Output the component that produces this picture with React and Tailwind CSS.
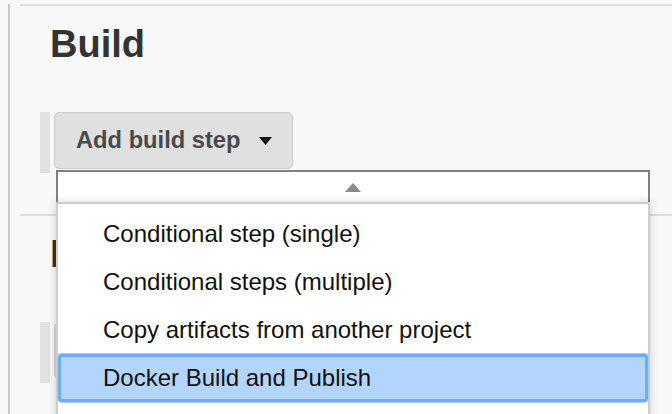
const MENU_ITEMS = [
  "Conditional step (single)",
  "Conditional steps (multiple)",
  "Copy artifacts from another project",
  "Docker Build and Publish",
];

const SELECTED = 3;

function Caret() {
  return (
    <svg width="13" height="8" viewBox="0 0 13 8" className="shrink-0">
      <polygon points="0,0 13,0 6.5,8" fill="#111" />
    </svg>
  );
}

function DropdownMenu() {
  return (
    <div className="absolute left-[16px] top-[58px] w-[594px] z-10">
      {/* scroll-up strip */}
      <div className="h-[32px] bg-white border-2 border-b-0 border-[#808080] flex justify-center pt-[11px]">
        <svg width="16" height="9" viewBox="0 0 16 9">
          <polygon points="8,0 16,9 0,9" fill="#8a8a8a" />
        </svg>
      </div>
      <div className="bg-white border-2 border-[#cdcdcd] border-b-0 pt-[6px] h-[240px] shadow-[0_0_8px_rgba(0,0,0,0.18)]">
        {MENU_ITEMS.map((item, i) => (
          <div
            key={item}
            className={
              i === SELECTED
                ? "h-12 flex items-center pl-[42px] text-[24px] text-[#111] bg-[#b3d4fc] border-[3px] border-[#6eaef8] rounded-[4px] shadow-[0_0_0_1px_#a8cdfb]"
                : "h-12 flex items-center pl-[45px] text-[24px] text-[#111]"
            }
          >
            {item}
          </div>
        ))}
      </div>
    </div>
  );
}

function Section({ title, button, first, children }) {
  return (
    <div className={first ? "mt-1" : "mt-[41px]"}>
      <div className="h-[2px] bg-[#dddddd]" />
      <h2 className="ml-[30px] mt-[19px] text-[38px] leading-[38px] font-bold text-[#333]">
        {title}
      </h2>
      <div className="relative ml-[20px] mt-[49px] flex items-start gap-1">
        <div className="w-[10px] h-[61px] bg-[#e1e1e1]" />
        <button className="h-[57px] flex items-center gap-[19px] pl-[21px] pr-[20px] bg-[#e0e0e0] border border-[#cccccc] rounded-[5px] text-[23.7px] font-bold text-[#4a4a4a]">
          {button}
          <Caret />
        </button>
        {children}
      </div>
    </div>
  );
}

export default function App() {
  return (
    <div
      className="h-[414px] overflow-hidden bg-[#f8f8f8] pl-2"
      style={{ fontFamily: '"Liberation Sans", Arial, sans-serif' }}
    >
      <div className="h-full border-l-2 border-[#c8c8c8] pl-[10px]">
        <Section title="Build" button="Add build step" first>
          <DropdownMenu />
        </Section>
        <Section title="Post-build Actions" button="Add post-build action" />
      </div>
    </div>
  );
}
